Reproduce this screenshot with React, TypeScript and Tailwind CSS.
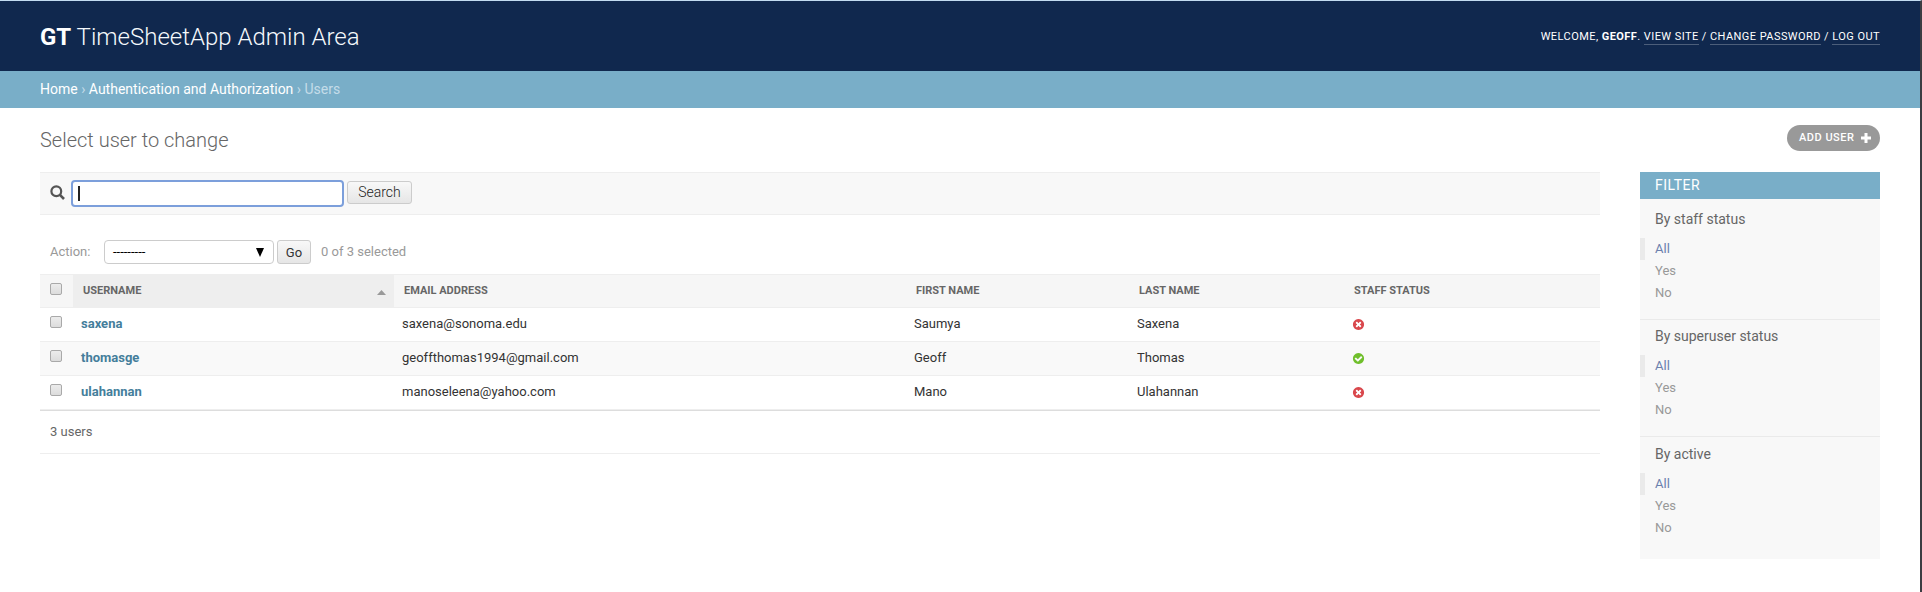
import type { ReactNode } from "react";

const users = [
  { username: "saxena", email: "saxena@sonoma.edu", first: "Saumya", last: "Saxena", staff: false },
  { username: "thomasge", email: "geoffthomas1994@gmail.com", first: "Geoff", last: "Thomas", staff: true },
  { username: "ulahannan", email: "manoseleena@yahoo.com", first: "Mano", last: "Ulahannan", staff: false },
];

const filters = [
  { title: "By staff status", box: "h-[121px] pt-[11px]" },
  { title: "By superuser status", box: "h-[117px] pt-[7px]" },
  { title: "By active", box: "h-[122px] pt-2" },
];

function Checkbox() {
  return (
    <span className="block size-3 rounded-[2px] border border-[#a9a9a9] bg-linear-to-b from-[#ececec] to-[#dcdcdc]" />
  );
}

function StatusIcon({ on }: { on: boolean }) {
  return on ? (
    <svg className="size-[13px]" viewBox="0 0 1792 1792" fill="#70bf2b">
      <path d="M1412 734q0-28-18-46l-91-90q-19-19-45-19t-45 19l-408 407-226-226q-19-19-45-19t-45 19l-91 90q-18 18-18 46 0 27 18 45l362 362q19 19 45 19 27 0 46-19l543-543q18-18 18-45zm252 162q0 209-103 385.500t-279.500 279.500-385.500 103-385.500-103-279.500-279.500-103-385.500 103-385.500 279.500-279.500 385.500-103 385.500 103 279.500 279.500 103 385.500z" />
    </svg>
  ) : (
    <svg className="size-[13px]" viewBox="0 0 1792 1792" fill="#d9474c">
      <path d="M1277 1122q0-26-19-45l-181-181 181-181q19-19 19-45 0-27-19-46l-90-90q-19-19-46-19-26 0-45 19l-181 181-181-181q-19-19-45-19-27 0-46 19l-90 90q-19 19-19 46 0 26 19 45l181 181-181 181q-19 19-19 45 0 27 19 46l90 90q19 19 46 19 26 0 45-19l181-181 181 181q19 19 45 19 27 0 46-19l90-90q19-19 19-46zm387-226q0 209-103 385.500t-279.500 279.500-385.500 103-385.500-103-279.500-279.500-103-385.500 103-385.500 279.500-279.500 385.500-103 385.500 103 279.500 279.500 103 385.500z" />
    </svg>
  );
}

function HeaderLink({ children }: { children: ReactNode }) {
  return <a className="border-b border-white/25 pb-px">{children}</a>;
}

const columns = "grid grid-cols-[33px_321px_512px_223px_216px_1fr] items-center";

export default function App() {
  return (
    <div className="h-[592px] overflow-hidden border-t border-r-2 border-t-[#c3dcf1] border-r-[#3b3d42] bg-white font-[Roboto,sans-serif] text-[13px] text-[#333]">
      <header className="flex h-[70px] items-center justify-between bg-[#10284e] px-10 pt-0.5">
        <h1 className="text-2xl font-light text-[#f5f9fc]">
          <b className="font-bold text-white">GT</b> TimeSheetApp Admin Area
        </h1>
        <div className="text-[11px] tracking-[0.44px] text-white uppercase">
          Welcome, <b>Geoff</b>. <HeaderLink>View site</HeaderLink> / <HeaderLink>Change password</HeaderLink> /{" "}
          <HeaderLink>Log out</HeaderLink>
        </div>
      </header>

      <nav className="flex h-[37px] items-center bg-[#79aec8] px-10 pb-0.5 text-sm whitespace-pre text-[#c4dce8]">
        <a className="text-white">Home</a> › <a className="text-white">Authentication and Authorization</a> › Users
      </nav>

      <main className="px-10">
        <div className="flex h-16 items-start justify-between">
          <h2 className="pt-[17px] text-xl leading-[30px] font-light text-[#666]">Select user to change</h2>
          <a className="mt-[17px] flex h-[26px] w-[93px] items-center rounded-full bg-[#999] pl-3 text-[11px] font-medium tracking-[0.5px] text-white">
            ADD USER
            <svg className="ml-[7px] size-[10px]" viewBox="0 0 10 10" fill="white">
              <path d="M3.500 0h3v3.500h3.500v3h-3.500v3.500h-3v-3.500h-3.500v-3h3.500z" />
            </svg>
          </a>
        </div>

        <div className="flex items-start gap-10">
          <section className="w-[1560px]">
            <div className="flex h-[43px] items-center border-y border-[#eee] bg-[#f8f8f8] pl-[10px]">
              <svg className="mb-0.5 size-[15px]" viewBox="0 0 15 15" fill="none" stroke="#555" strokeWidth="2.200">
                <circle cx="6.300" cy="6.300" r="4.900" />
                <path d="M9.700 9.700 14 14" strokeWidth="2.600" />
              </svg>
              <div className="ml-[6px] flex h-[27px] w-[273px] items-center rounded-[4px] border-2 border-[#7c9fdb] bg-white pl-[5px]">
                <span className="h-[15px] w-[2px] bg-[#222]" />
              </div>
              <button className="mb-0.5 ml-[3px] h-[23px] w-[65px] rounded-[3px] border border-[#ccc] bg-linear-to-b from-[#f8f8f8] to-[#e6e6e6] pb-px text-sm leading-none font-light text-[#222]">
                Search
              </button>
            </div>

            <div className="flex h-[59px] items-center pt-[15px] pl-[10px] text-[#999]">
              <span className="w-[54px]">Action:</span>
              <div className="flex h-6 w-[170px] items-center justify-between rounded-[4px] border border-[#ccc] pr-[9px] pl-2 text-sm text-black">
                <span className="text-[13px]">---------</span>
                <svg className="h-[9px] w-2" viewBox="0 0 8 9" fill="black">
                  <path d="M0 0h8L4 9z" />
                </svg>
              </div>
              <button className="ml-[3px] h-6 w-[34px] rounded-[3px] border border-[#ccc] bg-linear-to-b from-[#f8f8f8] to-[#e6e6e6] pt-0.5 text-[13px] text-[#333]">
                Go
              </button>
              <span className="ml-[10px]">0 of 3 selected</span>
            </div>

            <div className={`${columns} h-[34px] border-y border-[#eee] bg-[#f6f6f6] text-[11px] font-bold text-[#666]`}>
              <div className="pb-1 pl-[10px]">
                <Checkbox />
              </div>
              <div className="flex h-full items-center justify-between bg-[#eee] pr-2 pl-[10px]">
                <span className="pt-px">USERNAME</span>
                <svg className="mt-[3px] h-[5px] w-[9px]" viewBox="0 0 9 5" fill="#999">
                  <path d="M0 5h9L4.500 0z" />
                </svg>
              </div>
              <div className="pt-px pl-[10px]">EMAIL ADDRESS</div>
              <div className="pt-px pl-[10px]">FIRST NAME</div>
              <div className="pt-px pl-[10px]">LAST NAME</div>
              <div className="pt-px pl-[9px]">STAFF STATUS</div>
            </div>
            {users.map((user) => (
              <div key={user.username} className={`${columns} h-[34px] border-b border-[#eee] even:bg-white odd:bg-[#f9f9f9]`}>
                <div className="pb-1.5 pl-[10px]">
                  <Checkbox />
                </div>
                <a className="pb-0.5 pl-2 font-bold text-[#447e9b]">{user.username}</a>
                <div className="pb-0.5 pl-2">{user.email}</div>
                <div className="pb-0.5 pl-2">{user.first}</div>
                <div className="pb-0.5 pl-2">{user.last}</div>
                <div className="pl-[7px]">
                  <StatusIcon on={user.staff} />
                </div>
              </div>
            ))}
            <div className="flex h-[44px] items-center border-t border-b border-t-[#ddd] border-b-[#eee] pl-[10px] text-[#666]">
              3 users
            </div>
          </section>

          <aside className="h-[387px] w-60 bg-[#f8f8f8]">
            <h3 className="flex h-[27px] items-center bg-[#79aec8] pb-px pl-[15px] text-sm tracking-[0.5px] text-white">
              FILTER
            </h3>
            {filters.map(({ title, box }) => (
              <div key={title} className={`${box} border-b border-[#eaeaea] last:border-0`}>
                <h4 className="pb-[10px] pl-[15px] text-sm leading-[18px] text-[#666]">{title}</h4>
                <ul className="text-[13px] leading-[22px] text-[#999]">
                  <li className="border-l-[5px] border-[#eaeaea] pl-[10px] text-[#6b80ae]">All</li>
                  <li className="pl-[15px]">Yes</li>
                  <li className="pl-[15px]">No</li>
                </ul>
              </div>
            ))}
          </aside>
        </div>
      </main>
    </div>
  );
}
